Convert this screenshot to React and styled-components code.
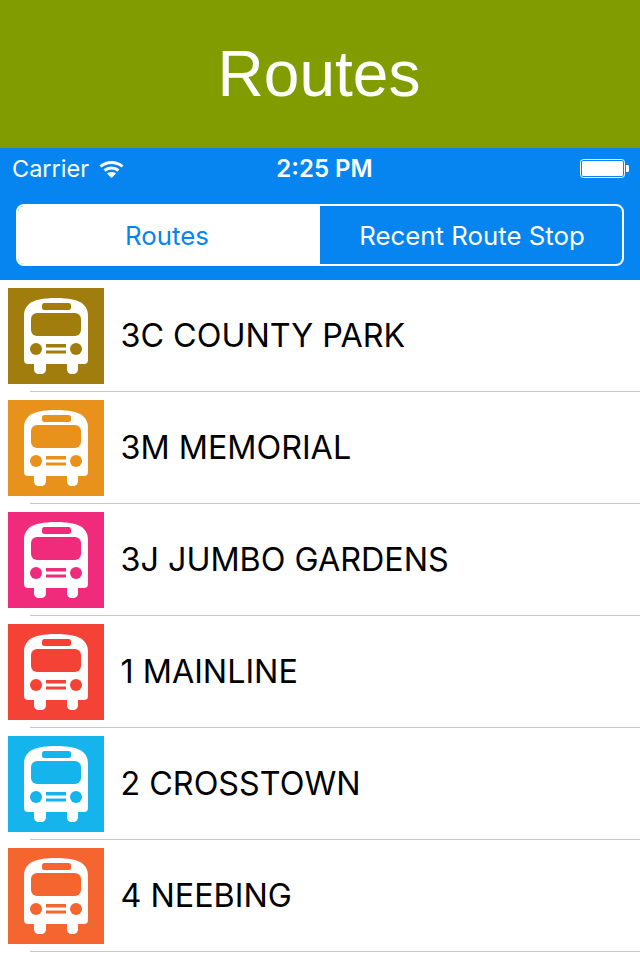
import React from "react";
import styled, { createGlobalStyle } from "styled-components";

const Global = createGlobalStyle`
  html, body { margin: 0; padding: 0; background: #fff; }
  body { font-family: "Inter", "Liberation Sans", sans-serif; }
`;
const Page = styled.div`
  width: 640px; height: 960px; overflow: hidden; display: flex; flex-direction: column;
`;
const Banner = styled.header`
  height: 148px; padding-right: 2px; box-sizing: border-box; background: #809c00; color: #fff; display: flex; align-items: center; justify-content: center;
  font: 400 64px "Liberation Sans", sans-serif;
`;
const Nav = styled.div`
  height: 132px; background: #0685f1; color: #fff; display: flex; flex-direction: column;
`;
const Status = styled.div`
  height: 40px; padding: 1px 11px 0 12px; box-sizing: border-box; display: grid; grid-template-columns: 1fr auto 1fr; align-items: center;
`;
const Carrier = styled.div`display: flex; align-items: center; gap: 10px; font-size: 23.5px;`;
const Time = styled.div`font-weight: 600; font-size: 24px; margin-left: 8px;`;
const Battery = styled.div`justify-self: end; display: flex;`;
const Segments = styled.div`
  margin: 16px 16px 0; height: 62px; box-sizing: border-box; display: flex; border: 2px solid #fff; border-radius: 8px; overflow: hidden;
`;
const Segment = styled.div`
  flex: none; width: 50%; box-sizing: border-box; display: flex; align-items: center; justify-content: center; font-size: 25.8px;
  padding: ${p => p.$active ? "0 4px 0 0" : "0 0 0 2px"};
  background: ${p => p.$active ? "#fff" : "transparent"}; color: ${p => p.$active ? "#0685f1" : "#fff"};
`;
const List = styled.div`display: flex; flex-direction: column;`;
const Row = styled.div`
  position: relative; height: 112px; box-sizing: border-box; padding: 8px; display: flex; align-items: flex-start; gap: 16.5px;
  &::after { content: ""; position: absolute; left: 30px; right: 0; bottom: 0; height: 1px; background: #c8c8c8; }
`;
const Tile = styled.div`
  width: 96px; height: 96px; background: ${p => p.$color}; display: flex; align-items: center; justify-content: center; flex: none;
`;
const Name = styled.div`
  height: 94px; display: flex; align-items: center; font: 400 32.3px "Inter", sans-serif; color: #000;
`;

const Bus = ({ color }) => (
  <svg width="64" height="76" viewBox="0 0 64 76">
    <path fill="#fff" d="M32 0C44 0 55 2 59 6C62 9 64 12 64 18V62C64 65 62 66 60 66H54V71C54 74 52 76 49 76H48C45 76 43 74 43 71V66H22V71C22 74 20 76 17 76H15C12 76 10 74 10 71V66H4C2 66 0 65 0 62V18C0 12 2 9 5 6C9 2 20 0 32 0Z" />
    <rect x="18" y="5" width="29" height="7" rx="2.5" fill={color} />
    <rect x="7" y="15" width="50" height="23" rx="6" fill={color} />
    <circle cx="12" cy="51" r="6" fill={color} />
    <circle cx="52" cy="51" r="6" fill={color} />
    <rect x="22" y="46" width="20" height="3.5" fill={color} />
    <rect x="22" y="52.5" width="20" height="3" fill={color} />
  </svg>
);

const routes = [
  ["3C COUNTY PARK", "#a07d0c"],
  ["3M MEMORIAL", "#e8921c"],
  ["3J JUMBO GARDENS", "#f12b7b"],
  ["1 MAINLINE", "#f44236"],
  ["2 CROSSTOWN", "#16b4ec"],
  ["4 NEEBING", "#f56530"],
];

export default function App() {
  return (
    <Page>
      <Global />
      <Banner>Routes</Banner>
      <Nav>
        <Status>
          <Carrier>
            Carrier
            <svg width="25" height="18" viewBox="0 0 25 18">
              <path fill="none" stroke="#fff" strokeWidth="3" d="M1.5 6.5C7.5 1 17.5 1 23.5 6.5" />
              <path fill="none" stroke="#fff" strokeWidth="3" d="M5.5 10.5C9.5 7 15.5 7 19.5 10.5" />
              <path fill="#fff" d="M12.5 18L8 13.5C10.5 11.5 14.5 11.5 17 13.5Z" />
            </svg>
          </Carrier>
          <Time>2:25 PM</Time>
          <Battery>
            <svg width="49" height="20" viewBox="0 0 49 20">
              <rect x="0.5" y="0.5" width="44" height="18" rx="3" fill="none" stroke="#fff" />
              <rect x="2" y="2" width="41" height="15" rx="1.5" fill="#fff" />
              <path fill="#fff" d="M46 6H47.5C48.4 6 49 6.6 49 7.5V11.5C49 12.4 48.4 13 47.5 13H46Z" />
            </svg>
          </Battery>
        </Status>
        <Segments>
          <Segment $active>Routes</Segment>
          <Segment>Recent Route Stop</Segment>
        </Segments>
      </Nav>
      <List>
        {routes.map(([n, c]) => (
          <Row key={n}>
            <Tile $color={c}><Bus color={c} /></Tile>
            <Name>{n}</Name>
          </Row>
        ))}
      </List>
    </Page>
  );
}
